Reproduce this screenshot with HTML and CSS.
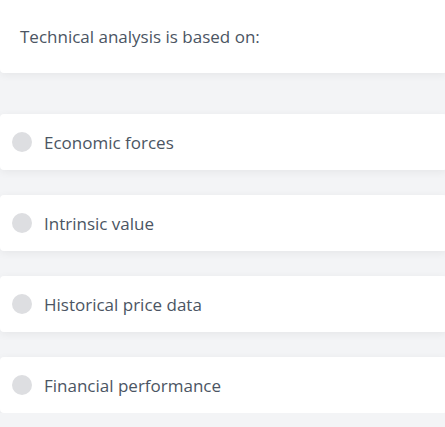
FILE: index.html
```html
<!DOCTYPE html>
<html lang="en">
<head>
  <meta charset="UTF-8">
  <meta name="viewport" content="width=device-width, initial-scale=1.0">
  <title>Quiz</title>
  <link rel="stylesheet" href="styles.css">
</head>
<body>
  <div class="quiz">
    <div class="card question">Technical analysis is based on:</div>

    <ul class="options">
      <li class="card option"><span class="radio"></span>Economic forces</li>
      <li class="card option"><span class="radio"></span>Intrinsic value</li>
      <li class="card option"><span class="radio"></span>Historical price data</li>
      <li class="card option"><span class="radio"></span>Financial performance</li>
    </ul>
  </div>
</body>
</html>
```

FILE: styles.css
```css
body {
  font-family: "Open Sans", "Noto Sans", sans-serif;
  margin: 0;
  padding: 0;
  background-color: #f3f4f6;
  color: #4b5563;
}

.quiz {
  margin-right: -2px;
}

.card {
  background-color: white;
  border-radius: 4px;
  box-shadow: 0 2px 8px rgba(0, 0, 0, 0.06);
}

.question {
  height: 73px;
  box-sizing: border-box;
  padding: 0 20px;
  display: flex;
  align-items: center;
  font-size: 17px;
  border-radius: 0 0 4px 4px;
}

.options {
  list-style: none;
  margin: 41px 0 0;
  padding: 0;
  display: flex;
  flex-direction: column;
  gap: 25px;
}

.option {
  height: 56px;
  box-sizing: border-box;
  padding: 0 12px;
  display: flex;
  align-items: center;
  gap: 12px;
  font-size: 17px;
}

.radio {
  width: 20px;
  height: 20px;
  border-radius: 50%;
  background-color: #dddee1;
  flex-shrink: 0;
}
```
